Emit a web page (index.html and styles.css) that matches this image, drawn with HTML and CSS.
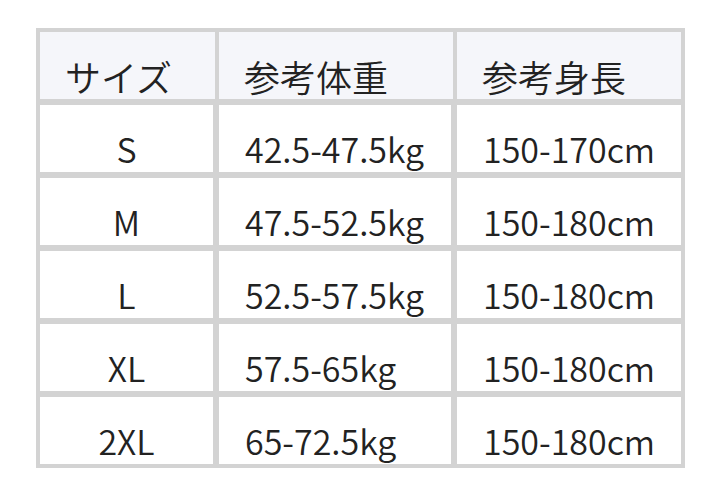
FILE: index.html
```html
<!DOCTYPE html>
<html lang="ja">
<head>
<meta charset="utf-8">
<link rel="stylesheet" href="styles.css">
</head>
<body>
<div class="sheet">
  <div class="table">
    <div class="cell head">サイズ</div>
    <div class="cell head">参考体重</div>
    <div class="cell head last">参考身長</div>

    <div class="cell size">S</div>
    <div class="cell">42.5-47.5kg</div>
    <div class="cell">150-170cm</div>

    <div class="cell size">M</div>
    <div class="cell">47.5-52.5kg</div>
    <div class="cell">150-180cm</div>

    <div class="cell size">L</div>
    <div class="cell">52.5-57.5kg</div>
    <div class="cell">150-180cm</div>

    <div class="cell size">XL</div>
    <div class="cell">57.5-65kg</div>
    <div class="cell">150-180cm</div>

    <div class="cell size">2XL</div>
    <div class="cell">65-72.5kg</div>
    <div class="cell">150-180cm</div>
  </div>
</div>
</body>
</html>
```

FILE: styles.css
```css
html, body {
  margin: 0;
  padding: 0;
  background: #ffffff;
}

.sheet {
  width: 720px;
  height: 495px;
  padding: 28px 0 0 36px;
  box-sizing: border-box;
}

.table {
  display: grid;
  grid-template-columns: 173px 232px 224px;
  grid-auto-rows: 67px;
  gap: 6px;
  padding: 4px;
  width: max-content;
  background: #d3d3d3;
  font-family: "Noto Sans CJK JP", "Noto Sans", sans-serif;
  font-size: 34px;
  font-weight: 350;
  color: #222222;
}

.cell {
  background: #ffffff;
  display: flex;
  align-items: center;
  padding: 20px 0 0 26px;
  box-sizing: border-box;
  line-height: 1;
  white-space: nowrap;
}

.head {
  background: #f5f6fa;
  margin-right: -2px;
  font-size: 36px;
  padding-left: 25px;
}

.head.last {
  margin-right: 0;
}

.size {
  justify-content: center;
  padding-left: 0;
}
```
